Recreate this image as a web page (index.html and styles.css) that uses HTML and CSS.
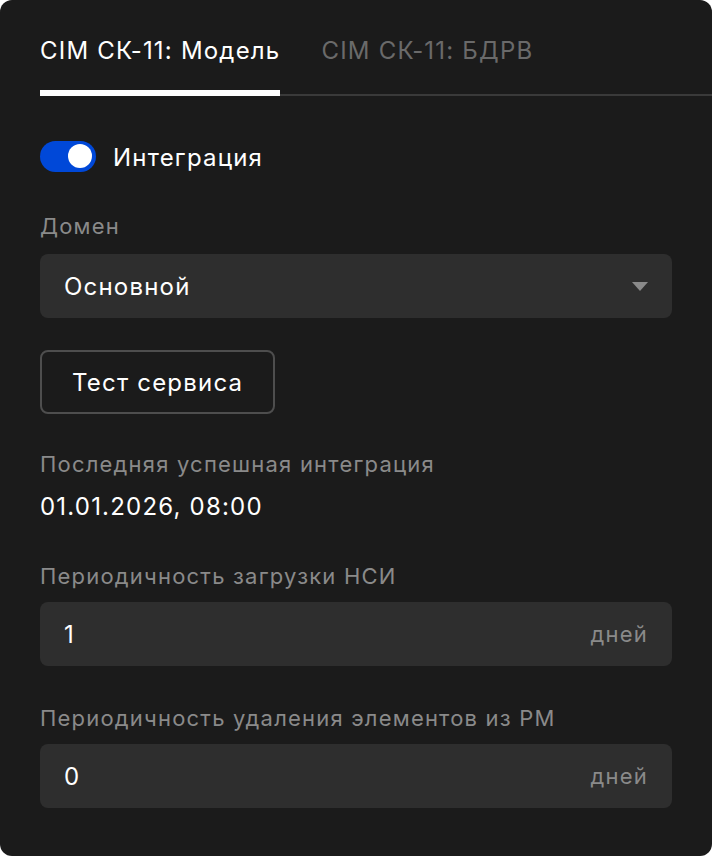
FILE: index.html
```html
<!DOCTYPE html>
<html>
<head>
	<title>Интеграция CIM</title>
	<link rel="stylesheet" href="styles.css">
</head>
<body>
	<div class="card">
		<div class="tabs">
			<div class="tab active">CIM СК-11: Модель</div>
			<div class="tab">CIM СК-11: БДРВ</div>
		</div>

		<div class="toggle-row">
			<div class="toggle"><span class="knob"></span></div>
			<span class="toggle-label">Интеграция</span>
		</div>

		<div class="field field-domain">
			<div class="label">Домен</div>
			<div class="control select">
				<span>Основной</span>
				<svg class="caret" width="16" height="9" viewBox="0 0 16 9"><path d="M0 0 H16 L8 9 Z" fill="#8a8a8a"/></svg>
			</div>
		</div>

		<button class="btn" type="button">Тест сервиса</button>

		<div class="field field-last">
			<div class="label">Последняя успешная интеграция</div>
			<div class="value">01.01.2026, 08:00</div>
		</div>

		<div class="field field-period">
			<div class="label">Периодичность загрузки НСИ</div>
			<div class="control">
				<span>1</span>
				<span class="unit">дней</span>
			</div>
		</div>

		<div class="field field-period2">
			<div class="label">Периодичность удаления элементов из РМ</div>
			<div class="control">
				<span>0</span>
				<span class="unit">дней</span>
			</div>
		</div>
	</div>
</body>
</html>
```

FILE: styles.css
```css
body {
	margin: 0;
	background: #ffffff;
	font-family: Inter, "Noto Sans", sans-serif;
	letter-spacing: 0.075em;
}
.card {
	box-sizing: border-box;
	height: 856px;
	background: #1b1b1b;
	border-radius: 12px;
	padding: 0 40px;
	color: #ffffff;
	overflow: hidden;
}
.tabs {
	display: flex;
	gap: 41px;
	padding-top: 35px;
	margin-right: -40px;
	box-shadow: inset 0 -2px 0 #3a3a3a;
}
.tab {
	font-size: 24px;
	line-height: 32px;
	padding-bottom: 29px;
	color: #6a6a6a;
}
.tab.active {
	color: #ffffff;
	padding-bottom: 23px;
	border-bottom: 6px solid #ffffff;
}
.toggle-row {
	display: flex;
	align-items: center;
	gap: 17px;
	margin-top: 44px;
	height: 32px;
}
.toggle {
	box-sizing: border-box;
	width: 56px;
	height: 31px;
	border-radius: 16px;
	background: #0048d8;
	display: flex;
	justify-content: flex-end;
	align-items: center;
	padding-right: 4px;
}
.knob {
	width: 24px;
	height: 24px;
	border-radius: 50%;
	background: #ffffff;
}
.toggle-label {
	font-size: 24px;
	line-height: 32px;
	padding-top: 3px;
}
.field {
	display: flex;
	flex-direction: column;
}
.label {
	font-size: 22px;
	line-height: 28px;
	color: #8a8a8a;
}
.control {
	box-sizing: border-box;
	height: 64px;
	margin-top: 12px;
	background: #2e2e2e;
	border-radius: 8px;
	padding: 0 24px;
	display: flex;
	align-items: center;
	justify-content: space-between;
	font-size: 24px;
}
.field-domain {
	margin-top: 40px;
}
.field-domain .control {
	margin-top: 14px;
}
.unit {
	font-size: 22px;
	color: #8a8a8a;
}
.btn {
	margin-top: 32px;
	height: 64px;
	padding: 0 30px;
	background: transparent;
	border: 2px solid #4e4e4e;
	border-radius: 8px;
	color: #ffffff;
	font-family: inherit;
	letter-spacing: inherit;
	font-size: 24px;
}
.field-last {
	margin-top: 36px;
}
.value {
	margin-top: 13px;
	font-size: 24px;
	line-height: 32px;
}
.field-period {
	margin-top: 39px;
}
.field-period2 {
	margin-top: 38px;
}
```
